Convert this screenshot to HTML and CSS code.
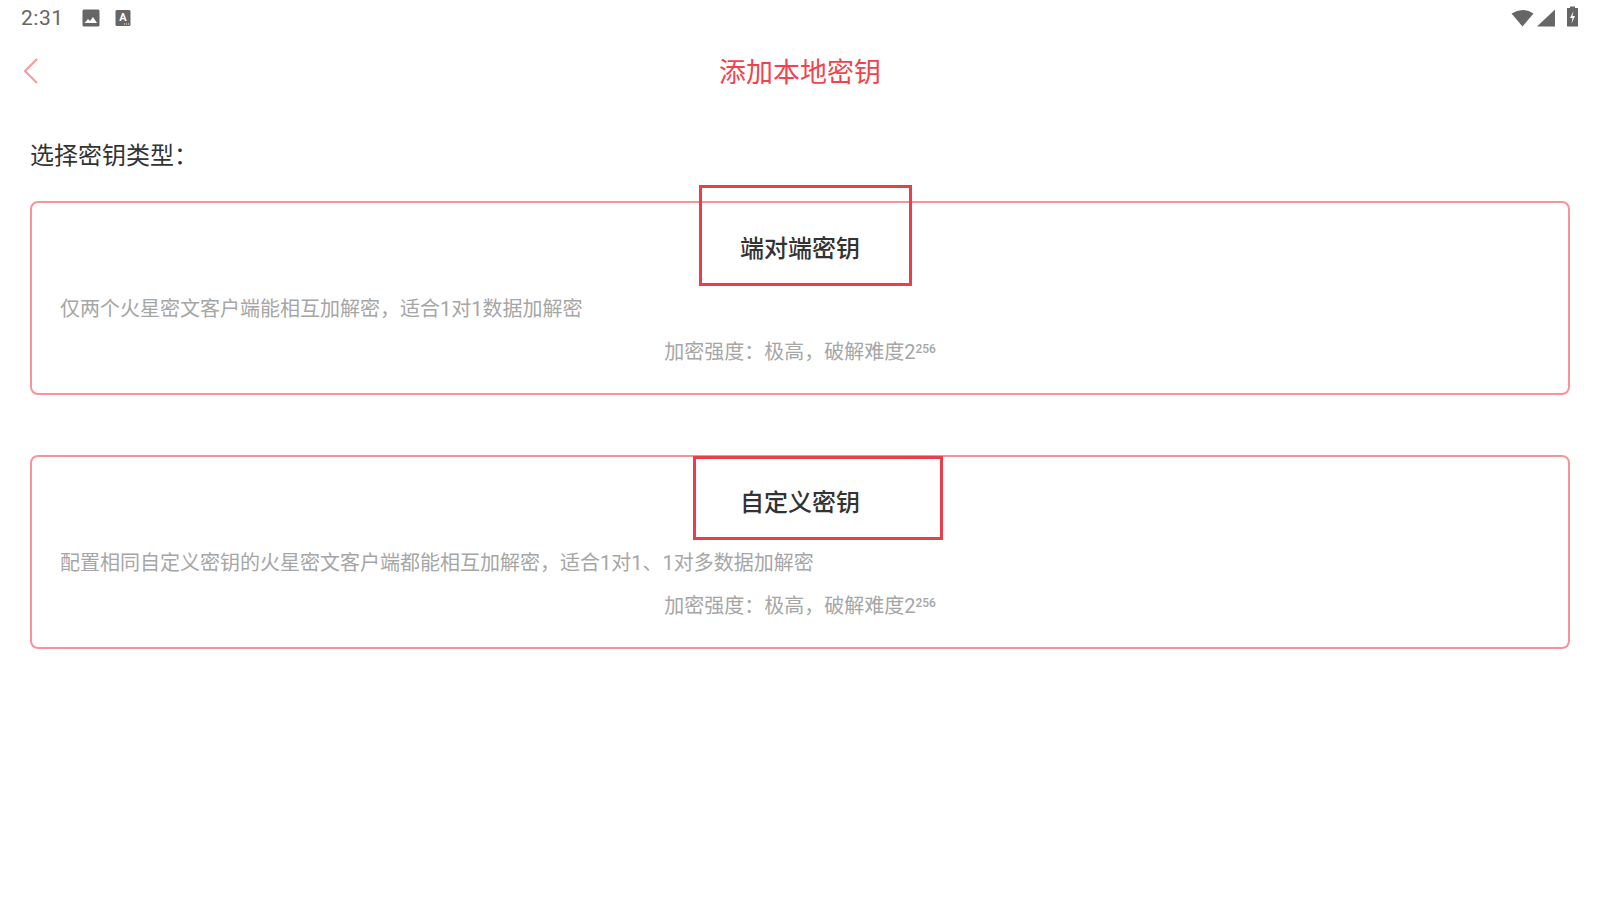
FILE: index.html
```html
<!DOCTYPE html>
<html lang="zh-CN">
<head>
<meta charset="utf-8">
<title>添加本地密钥</title>
<link rel="stylesheet" href="styles.css">
</head>
<body>
<div class="status">
  <div class="status-left">
    <span class="time">2:31</span>
    <svg class="ic-image" width="18" height="18" viewBox="0 0 18 18"><rect x="0.5" y="0.5" width="17" height="17" rx="1.500" fill="#666"/><path d="M2.500 14l3.500-4 2 2 3-4 4 6z" fill="#fff"/></svg>
    <svg class="ic-a" width="16" height="18" viewBox="0 0 16 18"><rect x="0.5" y="1" width="15" height="16" rx="1.500" fill="#666"/><text x="8" y="12" class="ic-a-text">A</text><path d="M9 15h1M11 15h1M13 15h1" stroke="#fff" stroke-width="1"/></svg>
  </div>
  <div class="status-right">
    <svg class="ic-wifi" width="23" height="18" viewBox="0 0 23 18"><path d="M0.500 4.500Q11.500-2.500 22.500 4.500L11.500 17.500z" fill="#666"/></svg>
    <svg class="ic-signal" width="18" height="18" viewBox="0 0 18 18"><path d="M0 17.500L18 0.500V17.500z" fill="#666"/></svg>
    <svg class="ic-battery" width="11" height="21" viewBox="0 0 11 21"><path d="M3 0.500h5v1.500h3V20.500H0V2h3z" fill="#666"/><path d="M6.500 5L3 12h2.500L4.500 17.500 8 10H5.500z" fill="#fff"/></svg>
  </div>
</div>
<header class="nav">
  <svg class="back" width="16" height="28" viewBox="0 0 16 28"><path d="M14 2L2 14l12 12" fill="none" stroke="#f9989d" stroke-width="2"/></svg>
  <h1 class="title">添加本地密钥</h1>
</header>
<main class="content">
  <h2 class="heading">选择密钥类型&#xFF1A;</h2>
  <section class="card card-first">
    <div class="mark mark-one"></div>
    <h3 class="card-title">端对端密钥</h3>
    <p class="desc">仅两个火星密文客户端能相互加解密&#xFF0C;适合1对1数据加解密</p>
    <p class="strength">加密强度&#xFF1A;极高&#xFF0C;破解难度2<sup class="exp">256</sup></p>
  </section>
  <section class="card">
    <div class="mark mark-two"></div>
    <h3 class="card-title">自定义密钥</h3>
    <p class="desc">配置相同自定义密钥的火星密文客户端都能相互加解密&#xFF0C;适合1对1、1对多数据加解密</p>
    <p class="strength">加密强度&#xFF1A;极高&#xFF0C;破解难度2<sup class="exp">256</sup></p>
  </section>
</main>
</body>
</html>
```

FILE: styles.css
```css
* { box-sizing: border-box; }
html, body { margin: 0; padding: 0; }
body {
  width: 1600px;
  height: 900px;
  overflow: hidden;
  background: #fff;
  font-family: Roboto, "Noto Sans CJK SC", sans-serif;
  color: #333;
}
.status {
  height: 36px;
  display: flex;
  justify-content: space-between;
  align-items: center;
  padding: 0 22px 0 21px;
}
.status-left { display: flex; align-items: center; }
.time { font-size: 21px; color: #666; width: 61px; letter-spacing: 0.5px; }
.ic-a { margin-left: 15px; }
.ic-a-text { font: bold 11px Roboto, sans-serif; fill: #fff; text-anchor: middle; }
.status-right { display: flex; align-items: center; }
.ic-signal { margin-left: 3px; }
.ic-battery { margin-left: 12px; margin-top: -3px; }
.nav {
  height: 72px;
  position: relative;
  display: flex;
  align-items: center;
  justify-content: center;
  padding-top: 2px;
}
.back { position: absolute; left: 23px; top: 21px; }
.title { margin: 0; font-size: 27px; font-weight: 400; color: #f2434c; line-height: 1; }
.content { padding: 32px 30px 0; }
.heading { margin: 0; font-size: 24px; font-weight: 400; line-height: 32px; color: #333; }
.card {
  position: relative;
  height: 194px;
  margin-top: 60px;
  border: 2px solid #f8939a;
  border-radius: 8px;
  padding: 30px 28px 0;
}
.card-first { margin-top: 29px; }
.card-title { margin: 0; height: 32px; font-size: 24px; font-weight: 500; line-height: 32px; text-align: center; color: #333; }
.desc { margin: 30px 0 0; font-size: 20px; line-height: 28px; color: #a6a6a6; }
.strength { margin: 15px 0 0; font-size: 20px; line-height: 28px; color: #a6a6a6; text-align: center; }
.exp { font-size: 12px; font-weight: 500; line-height: 0; vertical-align: 6px; }
.mark { position: absolute; border: 3px solid #e8404a; }
.mark-one { left: 667px; top: -18px; width: 213px; height: 101px; }
.mark-two { left: 661px; top: -1px; width: 250px; height: 84px; }
```
